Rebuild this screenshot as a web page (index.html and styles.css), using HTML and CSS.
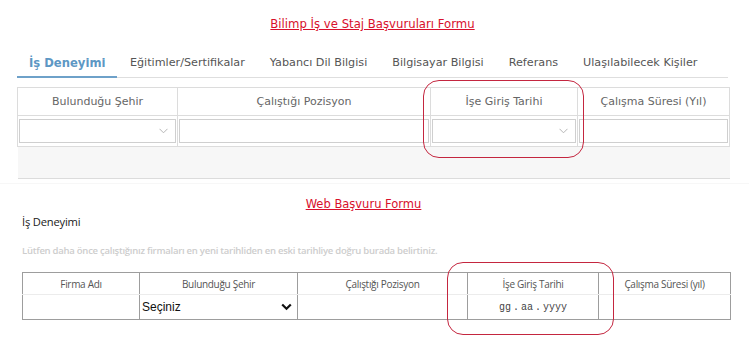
FILE: index.html
```html
<!DOCTYPE html>
<html lang="tr">
<head>
    <meta charset="UTF-8">
    <meta name="viewport" content="width=device-width, initial-scale=1.0">
    <title>Başvuru Formu</title>
    <link rel="stylesheet" href="styles.css">
</head>
<body>
    <div class="page">
        <div class="form-top">
            <h1 class="form-title"><a href="#">Bilimp İş ve Staj Başvuruları Formu</a></h1>

            <ul class="tabs">
                <li class="active">İş Deneyimi</li>
                <li>Eğitimler/Sertifikalar</li>
                <li>Yabancı Dil Bilgisi</li>
                <li>Bilgisayar Bilgisi</li>
                <li>Referans</li>
                <li>Ulaşılabilecek Kişiler</li>
            </ul>

            <table class="grid">
                <colgroup>
                    <col style="width: 160px">
                    <col style="width: 253px">
                    <col style="width: 147px">
                    <col style="width: 152px">
                </colgroup>
                <tr>
                    <th>Bulunduğu Şehir</th>
                    <th>Çalıştığı Pozisyon</th>
                    <th>İşe Giriş Tarihi</th>
                    <th>Çalışma Süresi (Yıl)</th>
                </tr>
                <tr class="edit-row">
                    <td>
                        <div class="field select">
                            <svg width="9" height="6" viewBox="0 0 9 6"><path d="M0.5 0.8 L4.5 4.8 L8.5 0.8" fill="none" stroke="#b5b5b5" stroke-width="1"/></svg>
                        </div>
                    </td>
                    <td><div class="field"></div></td>
                    <td>
                        <div class="field select">
                            <svg width="9" height="6" viewBox="0 0 9 6"><path d="M0.5 0.8 L4.5 4.8 L8.5 0.8" fill="none" stroke="#b5b5b5" stroke-width="1"/></svg>
                        </div>
                    </td>
                    <td><div class="field"></div></td>
                </tr>
                <tr class="band">
                    <td colspan="4"></td>
                </tr>
            </table>
        </div>

        <div class="form-bottom">
            <h2 class="web-title"><a href="#">Web Başvuru Formu</a></h2>
            <h3 class="section-title">İş Deneyimi</h3>
            <p class="hint">Lütfen daha önce çalıştığınız firmaları en yeni tarihliden en eski tarihliye doğru burada belirtiniz.</p>

            <table class="web-grid">
                <colgroup>
                    <col style="width: 117px">
                    <col style="width: 158px">
                    <col style="width: 170px">
                    <col style="width: 131px">
                    <col style="width: 132px">
                </colgroup>
                <tr>
                    <th>Firma Adı</th>
                    <th>Bulunduğu Şehir</th>
                    <th>Çalıştığı Pozisyon</th>
                    <th>İşe Giriş Tarihi</th>
                    <th>Çalışma Süresi (yıl)</th>
                </tr>
                <tr>
                    <td></td>
                    <td>
                        <div class="web-select">
                            <span>Seçiniz</span>
                            <svg width="11" height="8" viewBox="0 0 11 8"><path d="M1.2 1.5 L5.5 5.8 L9.8 1.5" fill="none" stroke="#111" stroke-width="2.2"/></svg>
                        </div>
                    </td>
                    <td></td>
                    <td class="date">gg<span class="sep">.</span>aa<span class="sep">.</span>yyyy</td>
                    <td></td>
                </tr>
            </table>
        </div>

        <div class="mark mark-top"></div>
        <div class="mark mark-bottom"></div>
    </div>
</body>
</html>
```

FILE: styles.css
```css
body, html {
    margin: 0;
    padding: 0;
    background-color: #fff;
    font-family: "DejaVu Sans", Verdana, sans-serif;
}

.page {
    position: relative;
    width: 749px;
    height: 350px;
    overflow: hidden;
}

.form-top {
    padding-left: 17px;
}

.form-title {
    margin: 0;
    padding: 16px 21px 0 0;
    height: 16px;
    line-height: 16px;
    font-size: 11.7px;
    font-weight: normal;
    text-align: center;
}

.form-title a,
.web-title a {
    color: #d8102c;
    text-decoration: underline;
}

.tabs {
    display: flex;
    list-style: none;
    margin: 14px 0 0 0;
    padding: 0;
    width: 711px;
    border-bottom: 1px solid #dedede;
}

.tabs li {
    padding: 9px 12.5px 5px 12.5px;
    margin-bottom: -1px;
    line-height: 16px;
    font-size: 11.2px;
    color: #555;
    border-bottom: 2px solid transparent;
    white-space: nowrap;
}

.tabs li.active {
    padding: 9px 12px 5px 12px;
    color: #5d97c4;
    font-weight: bold;
    font-size: 11.6px;
    border-bottom-color: #6ea1c9;
}

/* ust tablo */
.grid {
    margin-top: 9px;
    border-collapse: collapse;
    table-layout: fixed;
    width: 712px;
}

.grid th {
    height: 27px;
    padding: 0;
    font-size: 11px;
    font-weight: normal;
    color: #666;
    border: 1px solid #dcdcdc;
}

.grid .edit-row td {
    height: 28px;
    padding: 1px 1px;
    border: 1px solid #dcdcdc;
}

.field {
    box-sizing: border-box;
    height: 24px;
    border: 1px solid #cfcfcf;
    background-color: #fff;
}

.select {
    display: flex;
    align-items: center;
    justify-content: flex-end;
    padding-right: 7px;
}

.grid .band td {
    height: 31px;
    padding: 0;
    background-color: #f7f7f7;
    border-bottom: 1px solid #dcdcdc;
}

/* alt form */
.form-bottom {
    margin-top: 4px;
    border-top: 1px solid #f7f7f7;
    padding-left: 22px;
    font-family: "Open Sans", sans-serif;
}

.web-title {
    margin: 0;
    padding: 12px 44px 0 0;
    line-height: 16px;
    font-family: "DejaVu Sans", Verdana, sans-serif;
    font-size: 11.5px;
    font-weight: normal;
    text-align: center;
}

.section-title {
    margin: 2px 0 0 0;
    line-height: 16px;
    font-size: 11.2px;
    font-weight: normal;
    color: #1a1a1a;
    letter-spacing: -0.2px;
}

.hint {
    margin: 14px 0 0 0;
    line-height: 14px;
    font-size: 9.5px;
    font-weight: 600;
    color: #cdcdcd;
    letter-spacing: -0.25px;
    white-space: nowrap;
}

.web-grid {
    margin-top: 14px;
    border-collapse: collapse;
    table-layout: fixed;
    width: 708px;
}

.web-grid th {
    height: 21px;
    padding: 0;
    font-size: 10px;
    font-weight: normal;
    color: #555;
    letter-spacing: -0.3px;
    border: 1px solid #9d9d9d;
    border-bottom: 1px solid #ececec;
}

.web-grid td {
    height: 24px;
    padding: 0;
    border: 1px solid #9d9d9d;
    border-top: none;
}

.web-select {
    display: flex;
    align-items: center;
    justify-content: space-between;
    height: 24px;
    padding: 0 5px 0 2px;
    font-family: "Liberation Sans", Arial, sans-serif;
    font-size: 12px;
    color: #111;
}

.date {
    text-align: center;
    font-family: "Liberation Mono", monospace;
    font-size: 10px;
    color: #444;
}

.date .sep {
    padding: 0 2px;
}

/* kirmizi isaretler */
.mark {
    position: absolute;
    box-sizing: border-box;
    border: 1px solid #c4263f;
    border-radius: 16px;
}

.mark-top {
    left: 423px;
    top: 80px;
    width: 161px;
    height: 78px;
}

.mark-bottom {
    left: 447px;
    top: 262px;
    width: 167px;
    height: 73px;
}
```
